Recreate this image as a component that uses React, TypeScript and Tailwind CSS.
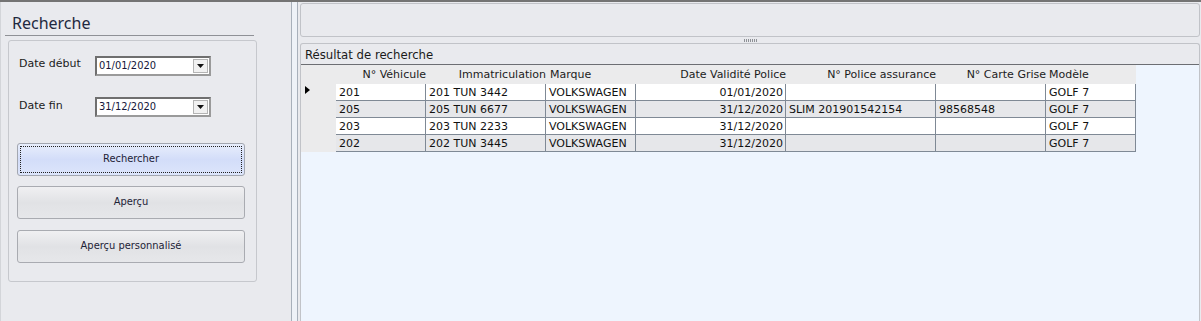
import React from "react";

const verdana = "[font-family:'DejaVu_Sans',Verdana,sans-serif]";
const tahoma = "[font-family:'DejaVu_Sans_Condensed','DejaVu_Sans',Tahoma,sans-serif]";

const columns = [
  { head: "N° Véhicule", w: "w-[90px]", headCls: "justify-end", cellCls: "justify-start pl-[3px]" },
  { head: "Immatriculation", w: "w-[120px]", headCls: "justify-end", cellCls: "justify-start pl-[3px]" },
  { head: "Marque", w: "w-[90px]", headCls: "justify-start pl-[4px]", cellCls: "justify-start pl-[3px]" },
  { head: "Date Validité Police", w: "w-[150px]", headCls: "justify-end", cellCls: "justify-end pr-[2px]" },
  { head: "N° Police assurance", w: "w-[150px]", headCls: "justify-end", cellCls: "justify-start pl-[3px]" },
  { head: "N° Carte Grise", w: "w-[110px]", headCls: "justify-end", cellCls: "justify-start pl-[3px]" },
  { head: "Modèle", w: "w-[90px]", headCls: "justify-start pl-[3px]", cellCls: "justify-start pl-[3px]" },
];

const rows = [
  ["201", "201 TUN 3442", "VOLKSWAGEN", "01/01/2020", "", "", "GOLF 7"],
  ["205", "205 TUN 6677", "VOLKSWAGEN", "31/12/2020", "SLIM 201901542154", "98568548", "GOLF 7"],
  ["203", "203 TUN 2233", "VOLKSWAGEN", "31/12/2020", "", "", "GOLF 7"],
  ["202", "202 TUN 3445", "VOLKSWAGEN", "31/12/2020", "", "", "GOLF 7"],
];

function DateField({ value }: { value: string }) {
  return (
    <div className="w-[116px] h-[20px] border-2 border-t-[#6f6f6f] border-l-[#6f6f6f] border-r-[#9a9a9a] border-b-[#9a9a9a] bg-white flex items-center">
      <span className={`flex-1 pl-[2px] text-[11px] leading-[14px] text-[#14163a] ${tahoma}`}>{value}</span>
      <div className="w-[15px] h-[14px] mr-[1px] border border-[#b4b4b4] bg-[#f1f1f1] flex items-center justify-center">
        <svg width="7" height="4" viewBox="0 0 7 4">
          <path d="M0 0h7L3.5 4z" fill="#111" />
        </svg>
      </div>
    </div>
  );
}

function Btn({ label, active }: { label: string; active?: boolean }) {
  return (
    <div
      className={
        active
          ? "h-[33px] w-[228px] rounded-[3px] border border-[#a3a7b0] bg-gradient-to-b from-[#e8eefc] via-[#d3ddf9] to-[#dce5fb] p-[2px]"
          : "h-[33px] w-[228px] rounded-[3px] border border-[#a9abb1] bg-gradient-to-b from-[#f0f0f2] via-[#e1e2e5] to-[#e6e7ea] p-[2px]"
      }
    >
      <div
        className={`h-full w-full flex items-center justify-center text-[11px] text-[#1d2236] ${tahoma} ${
          active ? "border border-dotted border-[#222]" : ""
        }`}
      >
        {label}
      </div>
    </div>
  );
}

export default function App() {
  return (
    <div className="w-[1201px] h-[321px] overflow-hidden border-t-2 border-[#747474] bg-[#e9eaee] flex">
      {/* left panel */}
      <div className="w-[292px] shrink-0 border-l border-r border-l-[#d3d5d9] border-r-[#a8b0bb] flex flex-col">
        <div className="h-[33px] pl-[11px] pt-[9px]">
          <span className="text-[16px] leading-[22px] text-[#1f2940] [font-family:'Noto_Sans','Open_Sans',sans-serif]">
            Recherche
          </span>
        </div>
        <div className="ml-[4px] w-[249px] h-[1px] bg-[#8f9196]" />
        <div className="ml-[7px] mt-[4px] w-[249px] h-[242px] rounded-[3px] border border-[#c6c8cd] pt-[15px]">
          <div className="flex items-start pl-[10px]">
            <span className={`w-[76px] mt-[1px] text-[11px] leading-[13px] text-[#1b1b1b] ${verdana}`}>Date début</span>
            <DateField value="01/01/2020" />
          </div>
          <div className="flex items-start pl-[10px] mt-[21px]">
            <span className={`w-[76px] mt-[2px] text-[11px] leading-[13px] text-[#1b1b1b] ${verdana}`}>Date fin</span>
            <DateField value="31/12/2020" />
          </div>
          <div className="ml-[8px] mt-[26px] flex flex-col gap-[10px]">
            <Btn label="Rechercher" active />
            <Btn label="Aperçu" />
            <div className="mt-[1px]">
              <Btn label="Aperçu personnalisé" />
            </div>
          </div>
        </div>
      </div>

      {/* splitter */}
      <div className="w-[6px] shrink-0 bg-[#eef2f8] border-r border-[#a8b0bb]" />

      {/* right panel */}
      <div className="flex-1 pl-[2px] pr-[1px] pt-[1px] flex flex-col">
        <div className="h-[34px] rounded-[3px] border border-[#c1c3c8] bg-[#e9eaee]" />
        <div className="h-[6px] flex items-center justify-center">
          <svg width="13" height="3" viewBox="0 0 13 3">
            {[0, 2, 4, 6, 8, 10, 12].map((x) => (
              <rect key={x} x={x} y="0" width="1" height="3" fill="#8e9196" />
            ))}
          </svg>
        </div>
        <div className="flex-1 rounded-t-[3px] border border-b-0 border-[#c1c3c8] flex flex-col">
          <div className={`h-[20px] pl-[4px] pt-[3px] text-[13px] leading-[16px] text-[#1a1a1a] ${tahoma}`}>
            Résultat de recherche
          </div>
          <div className="h-[1px] bg-[#6c6e73]" />
          <div className={`flex-1 bg-[#eef5fe] text-[11px] text-[#111] ${verdana}`}>
            <div className="w-[835px]">
              <div className="flex h-[19px] bg-[#ebebec] leading-[19px] text-[#1c1c1c]">
                <div className="w-[35px]" />
                {columns.map((c) => (
                  <div key={c.head} className={`${c.w} flex whitespace-nowrap ${c.headCls}`}>
                    {c.head}
                  </div>
                ))}
              </div>
              {rows.map((r, i) => (
                <div key={i} className={`flex h-[17px] ${i % 2 === 0 ? "bg-white" : "bg-[#e6e7ea]"}`}>
                  <div className="w-[35px] bg-[#ebebec] pl-[4px] pt-[2px]">
                    {i === 0 && (
                      <svg width="5" height="8" viewBox="0 0 5 8">
                        <path d="M0 0L5 4L0 8z" fill="#000" />
                      </svg>
                    )}
                  </div>
                  {columns.map((c, j) => (
                    <div
                      key={j}
                      className={`${c.w} flex whitespace-nowrap border-r border-b border-[#7f8995] pt-[2px] leading-[14px] ${c.cellCls}`}
                    >
                      {r[j]}
                    </div>
                  ))}
                </div>
              ))}
            </div>
          </div>
        </div>
      </div>
    </div>
  );
}
